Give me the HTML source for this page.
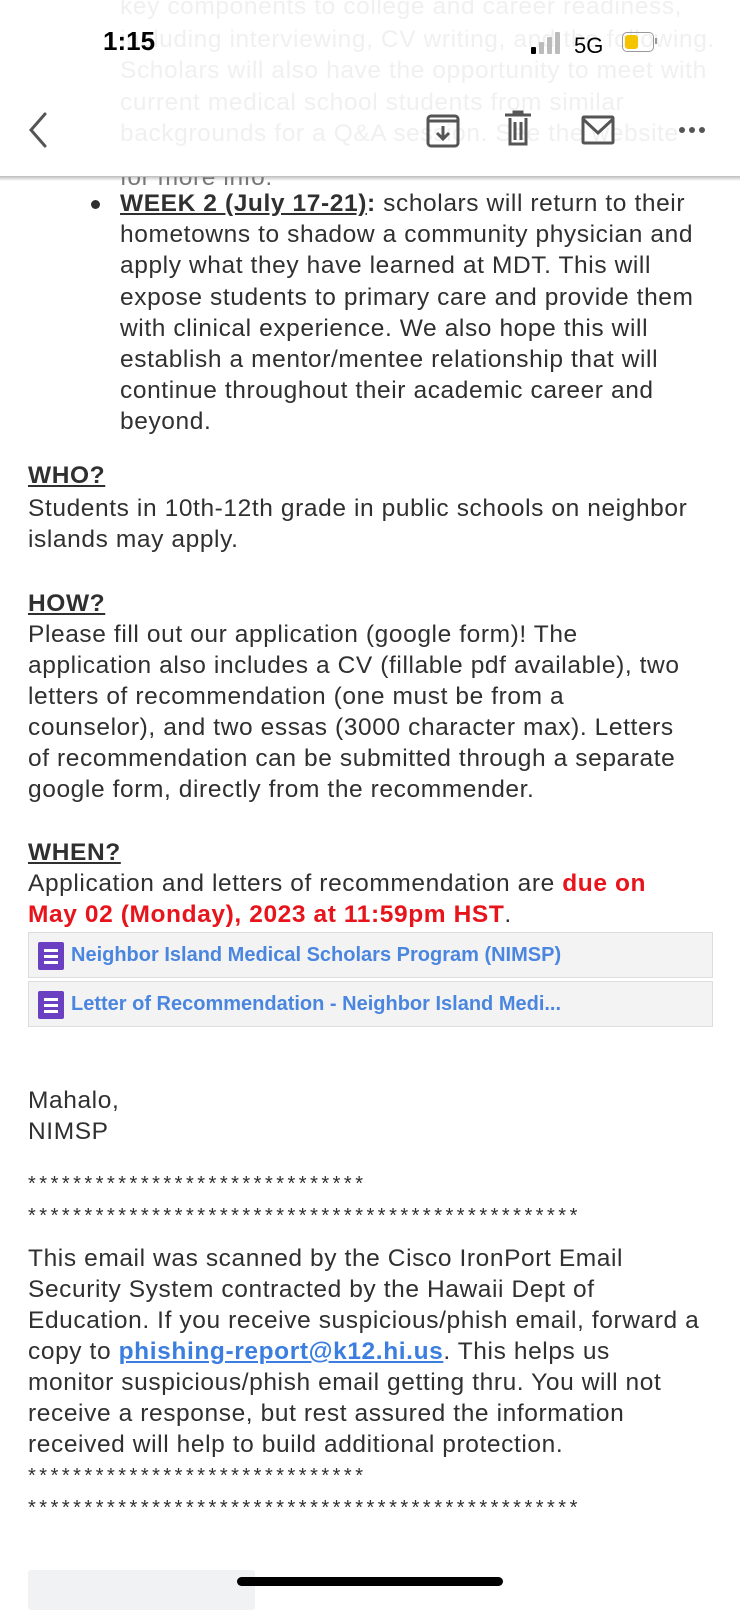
<!DOCTYPE html>
<html><head><meta charset="utf-8"><style>
body{margin:0;width:740px;height:1600px;overflow:hidden;background:#fff;font-family:"Liberation Sans",sans-serif;color:#303030;position:relative}
.l{position:absolute;left:28px;font-size:24.5px;letter-spacing:0.6px;white-space:nowrap;line-height:31px}
.b{left:120px}
.u{text-decoration:underline;font-weight:bold}
.red{color:#e8141b;font-weight:bold}
.st{position:absolute;left:28px;font-size:20px;letter-spacing:3.5px;white-space:nowrap}
.box{position:absolute;left:28px;width:685px;height:46px;background:#f3f3f3;border:1px solid #ddd;box-sizing:border-box}
.box .ic{position:absolute;left:9px;top:9px;width:26px;height:28px;background:#6a3fc1;border-radius:2px}
.box .ic i{position:absolute;left:6px;width:14px;height:2.5px;background:#fff}
.box .t{position:absolute;left:42px;top:11px;font-size:20px;font-weight:bold;color:#4a86e0}
.fade{color:#f0f0f0}
</style></head><body>
<div class="l fade" style="left:120px;top:-9px">key components to college and career readiness,</div>
<div class="l fade" style="left:120px;top:24px">including interviewing, CV writing, and the following.</div>
<div class="l fade" style="left:120px;top:55px">Scholars will also have the opportunity to meet with</div>
<div class="l fade" style="left:120px;top:87px">current medical school students from similar</div>
<div class="l fade" style="left:120px;top:118px">backgrounds for a Q&amp;A session. See the website</div>
<div style="position:absolute;left:0;top:176px;width:740px;height:5px;background:linear-gradient(#bbb,#fff)"></div>
<div class="l" style="left:120px;top:162px;color:#777;clip-path:inset(15px 0 0 0)">for more info.</div>
<div style="position:absolute;left:103px;top:26px;font-size:26px;font-weight:bold;color:#000">1:15</div>
<div style="position:absolute;left:531px;top:47px;width:5px;height:7px;background:#000;border-radius:1px"></div>
<div style="position:absolute;left:539px;top:42px;width:5px;height:12px;background:#bbb;border-radius:1px"></div>
<div style="position:absolute;left:547px;top:37px;width:5px;height:17px;background:#bbb;border-radius:1px"></div>
<div style="position:absolute;left:555px;top:32px;width:5px;height:22px;background:#bbb;border-radius:1px"></div>
<div style="position:absolute;left:574px;top:33px;font-size:22px;color:#000">5G</div>
<div style="position:absolute;left:622px;top:32px;width:30px;height:18px;border:1.5px solid #999;border-radius:5px"></div>
<div style="position:absolute;left:625px;top:35px;width:13px;height:14px;background:#f5c400;border-radius:3px"></div>
<div style="position:absolute;left:655px;top:38px;width:2px;height:6px;background:#999"></div>
<svg style="position:absolute;left:0;top:100px" width="740" height="60">
<path d="M45 14 L31 30 L45 46" fill="none" stroke="#555" stroke-width="3" stroke-linecap="round"/>
<g fill="none" stroke="#555" stroke-width="3">
<rect x="428" y="16" width="30" height="30" rx="3"/><line x1="428" y1="21" x2="458" y2="21"/>
<path d="M443 26v12M437 33l6 6 6-6"/>
<path d="M505 15h26M510 18v26h16V18M515 22v18M521 22v18M514 15v-3h8v3"/>
<rect x="583" y="17" width="30" height="26" rx="1"/><path d="M583 19l15 14 15-14"/>
</g>
<circle cx="682" cy="30" r="3" fill="#555"/><circle cx="692" cy="30" r="3" fill="#555"/><circle cx="702" cy="30" r="3" fill="#555"/>
</svg>
<div style="position:absolute;left:91px;top:200px;width:9px;height:9px;border-radius:50%;background:#303030"></div>
<div class="l b" style="top:188px"><span class="u">WEEK 2 (July 17-21)</span><b>:</b> scholars will return to their</div>
<div class="l b" style="top:219px">hometowns to shadow a community physician and</div>
<div class="l b" style="top:250px">apply what they have learned at MDT. This will</div>
<div class="l b" style="top:282px">expose students to primary care and provide them</div>
<div class="l b" style="top:313px">with clinical experience. We also hope this will</div>
<div class="l b" style="top:344px">establish a mentor/mentee relationship that will</div>
<div class="l b" style="top:375px">continue throughout their academic career and</div>
<div class="l b" style="top:406px">beyond.</div>
<div class="l u" style="top:460px">WHO?</div>
<div class="l" style="top:493px">Students in 10th-12th grade in public schools on neighbor</div>
<div class="l" style="top:524px">islands may apply.</div>
<div class="l u" style="top:588px">HOW?</div>
<div class="l" style="top:619px">Please fill out our application (google form)! The</div>
<div class="l" style="top:650px">application also includes a CV (fillable pdf available), two</div>
<div class="l" style="top:681px">letters of recommendation (one must be from a</div>
<div class="l" style="top:712px">counselor), and two essas (3000 character max). Letters</div>
<div class="l" style="top:743px">of recommendation can be submitted through a separate</div>
<div class="l" style="top:774px">google form, directly from the recommender.</div>
<div class="l u" style="top:837px">WHEN?</div>
<div class="l" style="top:868px">Application and letters of recommendation are <span class="red">due on</span></div>
<div class="l" style="top:899px"><span class="red">May 02 (Monday), 2023 at 11:59pm HST</span>.</div>
<div class="box" style="top:932px"><div class="ic"><i style="top:7px"></i><i style="top:13px"></i><i style="top:19px"></i></div><div class="t">Neighbor Island Medical Scholars Program (NIMSP)</div></div>
<div class="box" style="top:981px"><div class="ic"><i style="top:7px"></i><i style="top:13px"></i><i style="top:19px"></i></div><div class="t">Letter of Recommendation - Neighbor Island Medi...</div></div>
<div class="l" style="top:1085px">Mahalo,</div>
<div class="l" style="top:1116px">NIMSP</div>
<div class="st" style="top:1173px">******************************</div>
<div class="st" style="top:1205px">*************************************************</div>
<div class="l" style="top:1243px">This email was scanned by the Cisco IronPort Email</div>
<div class="l" style="top:1274px">Security System contracted by the Hawaii Dept of</div>
<div class="l" style="top:1305px">Education. If you receive suspicious/phish email, forward a</div>
<div class="l" style="top:1336px">copy to <span style="color:#3b7ee0;font-weight:bold;text-decoration:underline">phishing-report@k12.hi.us</span>. This helps us</div>
<div class="l" style="top:1367px">monitor suspicious/phish email getting thru. You will not</div>
<div class="l" style="top:1398px">receive a response, but rest assured the information</div>
<div class="l" style="top:1429px">received will help to build additional protection.</div>
<div class="st" style="top:1465px">******************************</div>
<div class="st" style="top:1497px">*************************************************</div>
<div style="position:absolute;left:28px;top:1570px;width:227px;height:40px;background:#f1f2f4;border-radius:3px"></div>
<div style="position:absolute;left:237px;top:1577px;width:266px;height:9px;background:#000;border-radius:5px"></div>
</body></html>
